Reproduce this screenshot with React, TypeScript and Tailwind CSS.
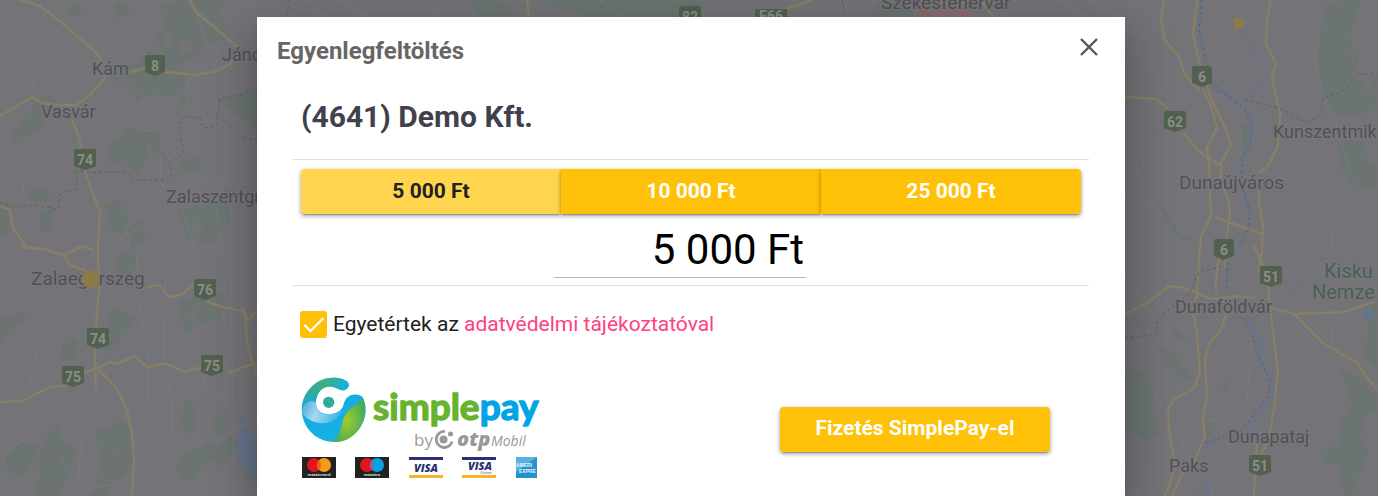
import { useState } from "react";

const amounts = ["5 000 Ft", "10 000 Ft", "25 000 Ft"];

const forests = [
  "M160 8l18-8h48l-8 12 12 22-10 8-14 0-8 14-20 10-14-14-8-14 10-14z",
  "M150 50l14 4 22 18-2 14-12 10-20-2-14 8-12-16-24-12 8-10 26 2z",
  "M66 10l14-6 2 10-12 4zM114 6l14-4 2 12-14 4zM22 120l10-10 2-8 14-6 6 10-10 12-4 14-14 4-12 14-2-14zM36 98l12-4 8 6-8 8-10-2z",
  "M112 140l8 2 6-16 18 8 4 24-12 16-12-14-14 4-2-12zM142 134l22-4-2 12 8 20-12-6zM176 162l20-6 8 10-8 6-16 2z",
  "M218 100l20-6 22-8v46l-22-16-20-14zM190 90l-4 20-10 6 2-18zM26 200l6-14 6 6 8-6 4 14-10 2zM178 212l20-10 22-2 4-14 12 8-8 14 4 14-14 10-6 12-24-4-6-16z",
  "M0 202l10 2 2 24-12 10zM40 214l14-6-4 24-10-2zM104 204l14-4 10 14-4 22-12-6zM128 228l14-8 4 20-14 12z",
  "M114 260l12-10 10 8-2 14-14 6zM178 302l18-6 16-8 14 10-6 22-22 4-12 12-4-18zM106 314l10-6 20 10-10 14-20 24-4-8 8-16zM62 342l12-8 4 12-4 14-12-2zM0 320l24-10 2 12-16 8-10 12z",
  "M96 432l22-10 18 4-6 20 4 20-16 14-14 16h-12l8-28zM6 456l16-14 16 2-2 14-18 20-12-10zM46 438l12-12 6 16 12 8-8 26-12 20H34l10-24-8-8zM184 398l10 6 2 22-10 16-4-18zM212 418l16-4-2 18-12 2zM176 466l10-14 14-4 12-10 8 10 10-12 8 6-10 22-22-4-10 20-14 0z",
  "M220 444l20-4 4 10-16 6zM236 454l22-2v24l-12 8zM40 474l8 4-4 16-10 0z",
  "M1324 6l22-6h18l-12 24-2 16 10 20-8 10 2 12 24-8v34l-20 8-26 0-8-22-6-36z",
  "M1340 140l22 2 6 20 10 6v18l-18 4-14-12-8-16z",
  "M1242 122l8 6-2 16-6 6zM1158 206l8 4 12 22 14 6-8 4-12-12zM1204 74l14 14 10 8-12-4-12-14zM1130 138l8 20 8 16-6-2zM1152 120l6 14-6-4z",
  "M1366 304h12v64l-14-12 4-22zM1340 370l12 2 26 26v14l-14 4-4 20 8 14-6 20-8 12 6 14h-14l-8-18 4-14-18-2-4-12 18-4 4-26 10-16z",
  "M1125 366l20 8 10 16-4 20 8 24-12 6-22-10zM1158 344l16 8 12 20 8 6-10 4-18-20zM1130 314l14 8 2 8-8-2zM1170 324l14 10 4 8-12-4zM1222 384l8-6-6 14zM1204 418l12 6-4 10-10 6zM1266 430l22 8 16-6 2 14-16-2-22 4z",
  "M470 0l28 0 20 16h-40zM540 0h170l-20 17H590l-24-6zM880 0h40l-10 17h-40z",
];

const urban = [
  "M178 42l12-4 2 12-10 6zM206 52l8 4-4 8-8-2zM166 30l8 8-6 10-6-6zM66 214l10 6-4 10-8-4zM194 222l8 0-2 12-10-2z",
  "M190 308l8 2-2 8-6 0zM114 446l8 4-4 8-6-4zM58 454l8 4-6 8zM1348 50l10 4-6 10zM1362 82l10-4 0 14-8-2z",
];

const fineRoads = [
  "M0 42l30 25 5 30M114 0l-22 50 10 20 24 10 14 12 8 22 14 22 6 22 24 20 28 10 32-4",
  "M34 96l40-18 30-26 28-18M90 113l30 4 16 12 14 2 20-8 16-16 4-32 20-4",
  "M186 0l8 8 8 20 12 44M162 122l-2 60 20 22 16 46M0 128l20 28 4 38",
  "M166 206l-16 18-30 14-16 12M216 206l6 44M230 200l4 290M166 246l-2 116 8 40 2 88",
  "M0 350l30-10 8-6 20 2 24-30 2-40M94 250l0 180-12 6-4 54M0 452l22-10 32-34",
  "M136 246l2 54 8 40 4 90M174 440l44 2 20-14 20-8M64 334l16 4M26 400l12-50 20-14M80 496l20-10 32-4",
  "M200 360l6 30 24 12M50 34l-10-34M0 60l28-20 28-10 40-12M210 180l44-14",
  "M1130 36l24-32M1138 42l20-24M1125 60l26 12 32-10 30-14M1192 42l30 0 10-10 36-22",
  "M1294 0l20 50 4 32 16 32 6 26M1340 140l10 30 18 30 10 4M1360 0l8 26 10 10",
  "M1125 192l20 14 24-6 18-8 20-4M1200 90l-20 10-30-8",
  "M1272 172l46 26 40 30 20 12M1260 6l34 0M1240 10l30-10M1210 70l14-24 10-16",
  "M1242 310l10 30-2 20-3 42-24 16-20 4M1125 366l24 20 32 50 10 34",
  "M1290 380l16-12 24-14 4-32 12-12M1335 210l-4 40-50 8-22 6M1256 430l24 20 8 14 24 10",
  "M1214 420l16 28-14 20-6 28M1125 470l38 0 26-16M1125 276l30 40M1160 316l40-16",
  "M310 0l12 17M340 0l30 17M430 0l6 17M600 0l20 17M1060 0l24 17M1090 0l28 17",
];

const mainRoads = [
  "M20 0l18 5 22 16 18 16 18 15 7 10M130 72l16-4 20 4 28 3 20-3 16-8 10-10M190 0l6 12 24 20 16 14",
  "M0 116l32-19 10 6 16 2 18 0 14-10 16-18M72 120l8 20 2 22 8 24 10 26-2 36 0 20 3 10-3 20-2 30-1 30 1 30",
  "M0 206l10 4 3 18 14 20 22 2 14 6 18-10 12 4M98 369l14 14 6 8 8 16 6 26 2 26-2 40",
  "M22 247l22 2 12 4 10 2 14-8M65 256l5 9 16 6M147 287l12-2 10 12 12-2 10-8 6-4M208 302l18 6 18 3 4 10 8-9M244 310l4 38 8 26",
  "M0 402l22-1 18-9 10-5 16-1M84 373l10-4M98 368l12-6 7 2 17-8 14 11 14-3 8 1 14 7 26-7M228 370l2 3 16-7 14-3",
  "M1164 0l-3 18 4 22 14 18 6 16 14 16M1197 0l-4 34 6 28 12 36 14 30 6 16-8 16-6 6",
  "M1203 88l8 18 6 22-10 20 2 18 2 50-10 20-2 24-2 34-4 16 4 24 3 38-6 16-20 12-6 8 1 22 6 36-6 20-4 10",
  "M1125 97l32 2 10 9M1184 134l14 16 10 8 14 8-2 14 8 18 2 14-4 30-1 24",
  "M1271 0l-4 20-1 24 10 20-4 14 8 36-2 32-10 20-8 6M1259 190l0 14 4 20-1 28-4 20",
  "M1220 250l-4 30 0 10M1254 246l8 16 6 20 2 24 4 34 4 30-4 40-6 30-8 18M1257 440l-1 26-2 30",
  "M1125 314l24-12 20-16 16 2 24 10 16 2M1217 299l20-3 18 2M1272 308l22 6 50-2 30-10M1294 314l30 30 32 18 14 20 8 8",
  "M1227 312l-6 18-12 14-4 16 2 36-4 24 2 16-10 24-12 12M1182 474l-10 22M1217 218l34 12 12 4M527 0l2 17M782 10l20-6 8-4M980 0l14 17",
];

const shields: [number, number, string][] = [
  [155, 65, "8"], [85, 159, "74"], [205, 289, "76"], [98, 338, "74"], [73, 376, "75"], [212, 365, "75"],
  [1202, 76, "6"], [1175, 121, "62"], [1224, 249, "6"], [1271, 276, "51"], [1260, 465, "51"], [690, 16, "82"],
];

const places: [number, number, string, number][] = [
  [92, 75, "Kám", 18], [41, 118, "Vasvár", 18], [222, 61, "Jáno", 18], [166, 203, "Zalaszentgr", 18],
  [31, 285, "Zalaegerszeg", 19], [881, 9, "Székesfehérvár", 19], [1179, 189, "Dunaújváros", 19],
  [1273, 138, "Kunszentmik", 18], [1175, 313, "Dunaföldvár", 18], [1228, 443, "Dunapataj", 18], [1169, 472, "Paks", 18],
];

function MapBackdrop() {
  return (
    <svg className="absolute inset-0 h-full w-full" viewBox="0 0 1378 496" preserveAspectRatio="xMidYMin slice" aria-hidden="true">
      <rect width="1378" height="496" fill="#747378" />
      <g fill="#6b7471">{forests.map((d) => <path key={d} d={d} />)}</g>
      <g fill="#747378">{urban.map((d) => <path key={d} d={d} />)}</g>
      <g fill="#65748a">
        <path d="M236 454l6-42 4 16 12 14v40l-8-10zM141 348l7 8-2 6zM142 363l4 10-2 4zM1155 61l8 1-1 5zM1173 56l5 7-6 1zM1207 284l9 3-2 4zM1363 312l6-4 6 4-2 6-8 2zM1038 180l4 2zM37 183l3-3 3 3z" />
        <path d="M1196 489l5 3-4 4z" />
      </g>
      <g fill="none" stroke="#68748a" strokeWidth="3" strokeLinejoin="round">
        <path d="M1202 0l-3 30 6 30 7 24 32 24 8 16-2 20-8 14 0 26 8 30-2 16-8 16-8 8M1227 262l0 30M1246 316l14 24 0 20 13 22-2 16-26 32M1227 440l-20 2-12 22 10 16 3 16" />
        <path strokeWidth="2" d="M1242 0l0 30 9 16 4 14 8 6M1268 74l-8 12-14 8-1 10 10 14M1260 124l12 6M1288 291l12-5 6-6" />
      </g>
      <g fill="none" stroke="#7a797d" strokeWidth="1">{fineRoads.map((d) => <path key={d} d={d} />)}</g>
      <g fill="none" strokeLinejoin="round" strokeLinecap="round">
        <g stroke="#7c7669" strokeWidth="4">{mainRoads.map((d) => <path key={d} d={d} />)}</g>
        <g stroke="#857f6f" strokeWidth="2">{mainRoads.map((d) => <path key={d} d={d} />)}</g>
      </g>
      <g fill="none" stroke="#5f5f64" strokeWidth="1" strokeDasharray="3 3">
        <path d="M0 203l14 4 20-2 24 4 2-16 16-3 1-19 20 2 28-2 9 9 30 0 8-4-2-12 14-12-6-26 8-10 14 2 4 10 12-2 4-28 22-3 18-8M216 114l28 24 14 2" />
        <path d="M1202 0l-3 30 6 30 7 24 32 24 8 16-2 20-8 14 0 26 8 30-2 16-8 16M1245 100l34 8 28 15 14-9 2-16 18-5 18-19 19-1M1125 338l32-4 0-14 32-26 10-22 24-6M1228 262l-2 30M1244 318l10 22 4 16 12 24-2 16-26 34-40 14" />
        <path d="M290 0l-4 17M842 0l4 17" />
      </g>
      <g>
        <path d="M908 0h17l7 17h-10c-5-7-7-13-14-17z" fill="#8d6867" />
        <path d="M933 17c5-14 35-14 42 0z" fill="#886c70" />
        <path d="M940 0h27l-6 6-20-1z" fill="#8b7e55" />
      </g>
      {places.map(([x, y, name, size]) => (
        <text key={name} x={x} y={y} fontSize={size} fill="#505055" stroke="#79787d" strokeWidth="2" paintOrder="stroke">{name}</text>
      ))}
      <g fontSize="20" fill="#486052" stroke="#79787d" strokeWidth="2" paintOrder="stroke">
        <text x="1324" y="278">Kisku</text>
        <text x="1312" y="299">Nemze</text>
      </g>
      {shields.map(([x, y, label]) => {
        const half = label.length === 1 ? 10 : 11;
        return (
          <g key={`${x}-${y}`}>
            <path d={`M${x - half} ${y - 8}q0-2 2-2h${half * 2 - 4}q2 0 2 2v15l-${half} 4l-${half}-4z`} fill="#52614e" />
            <text x={x} y={y + 6} textAnchor="middle" fontSize="14" fontWeight="700" fill="#8b8c8a">{label}</text>
          </g>
        );
      })}
      <path d="M755 9h32v18h-32z" fill="#52614e" />
      <text x="771" y="21" textAnchor="middle" fontSize="14" fontWeight="700" fill="#8b8c8a">E66</text>
      <circle cx="91" cy="279" r="9" fill="#8c7a48" />
      <path d="M1233 20q4-4 7-1q5-1 5 4l-4 6-6 0z" fill="#8c7a48" />
    </svg>
  );
}

function PaymentLogo() {
  return (
    <svg className="h-[106px] w-[240px] shrink-0" viewBox="300 376 240 106" role="img" aria-label="SimplePay by OTP Mobil">
      <defs>
        <linearGradient id="body" x1="0" y1="0" x2=".7" y2="1">
          <stop offset="0" stopColor="#3cae86" />
          <stop offset=".3" stopColor="#1ba9dc" />
          <stop offset=".8" stopColor="#14b0e6" />
          <stop offset="1" stopColor="#3cb09a" />
        </linearGradient>
        <radialGradient id="leaf" cx=".42" cy=".5" r=".6">
          <stop offset="0" stopColor="#a2cb2e" />
          <stop offset="1" stopColor="#43ad55" />
        </radialGradient>
        <linearGradient id="shine" x1="0" y1=".3" x2="1" y2=".6">
          <stop offset="0" stopColor="#4fb3d8" />
          <stop offset=".4" stopColor="#a9d8f0" />
          <stop offset="1" stopColor="#2fb3e6" />
        </linearGradient>
        <linearGradient id="rim" x1="0" y1="0" x2="1" y2="0">
          <stop offset="0" stopColor="#27a9b4" />
          <stop offset=".5" stopColor="#3db07c" />
          <stop offset="1" stopColor="#0fb0ea" />
        </linearGradient>
      </defs>
      <g transform="translate(298 374) scale(.3333)">
        <path d="M138 17C112 7 78 10 54 27C22 50 8 84 12 118C18 168 60 204 107 204C160 204 203 160 203 108C203 92 200 79 193 68C180 59 158 59 146 72C136 84 138 94 132 103C122 118 95 126 75 118C55 111 50 90 57 68C63 48 80 36 100 38C118 40 128 53 142 47C157 40 156 23 138 17Z" fill="url(#body)" />
        <path d="M138 17C112 7 78 10 54 27C28 46 14 72 12 100C24 76 44 66 57 68C63 48 80 36 100 38C118 40 128 53 142 47C157 40 156 23 138 17Z" fill="url(#rim)" />
        <path d="M12 112C18 82 40 74 54 86C53 104 62 120 88 122C108 122 124 114 132 103C130 130 102 150 72 148C40 146 16 130 12 112Z" fill="url(#shine)" />
        <path d="M196 74C207 110 200 150 168 182C150 198 130 204 107 204C124 190 128 165 135 138C144 106 170 96 196 74Z" fill="url(#leaf)" />
        <circle cx="92" cy="85" r="17" fill="#30ad9a" />
      </g>
      <g fontFamily="Lato, sans-serif" fontSize="37" fontWeight="700" strokeWidth="1.4" strokeLinejoin="round">
        <text x="373" y="420" fill="#65b32e" stroke="#65b32e">simple<tspan fill="#00a5e3" stroke="#00a5e3">pay</tspan></text>
      </g>
      <text x="414" y="446" fontSize="17" fontFamily="Open Sans, sans-serif" fill="#9b9b9b">by</text>
      <path d="M445 431.500a8 8 0 1 0 7 10" fill="none" stroke="#999" strokeWidth="2.8" />
      <circle cx="443.500" cy="439.500" r="4" fill="#999" />
      <circle cx="450.500" cy="434" r="2.5" fill="#999" />
      <text x="457" y="446" fontSize="20" fontFamily="Open Sans, sans-serif" fontWeight="800" fontStyle="italic" fill="#999">otp</text>
      <text x="491" y="446" fontSize="14" fontFamily="Open Sans, sans-serif" fontStyle="italic" fill="#999">Mobil</text>
      <g>
        <path d="M302 457h34v21h-34zM355 457h34v21h-34z" fill="#222" />
        <circle cx="314" cy="465" r="7" fill="#e3151c" />
        <circle cx="324" cy="465" r="7" fill="#f59b14" />
        <path d="M319 460q4 5 0 10q-4-5 0-10z" fill="#f15c1b" />
        <circle cx="367" cy="465" r="7" fill="#e3151c" />
        <circle cx="377" cy="465" r="7" fill="#08a2e2" />
        <path d="M372 460q4 5 0 10q-4-5 0-10z" fill="#7a6cab" />
        <g fontFamily="Open Sans, sans-serif" fontSize="4" fontWeight="700" fill="#ddd" textAnchor="middle">
          <text x="319" y="476">mastercard</text>
          <text x="372" y="476">maestro</text>
        </g>
      </g>
      <g fontFamily="Open Sans, sans-serif" fontWeight="800" fontStyle="italic" fill="#2c3072" textAnchor="middle">
        <path d="M409 457h34v3h-34zM462 457h34v3h-34z" />
        <path d="M409 475h34v3h-34zM462 475h34v3h-34z" fill="#f7b326" />
        <text x="426" y="472" fontSize="11">VISA</text>
        <text x="480" y="470" fontSize="11">VISA</text>
        <text x="486" y="474" fontSize="3" fontWeight="400">Electron</text>
      </g>
      <path d="M516 457h21v21h-21z" fill="#2591cf" />
      <path d="M516 457h21l-21 15z" fill="#57b2df" />
      <g fontFamily="Liberation Sans, sans-serif" fontSize="5" fontWeight="700" fill="#e5f5fc">
        <text x="516" y="467">AMERI</text>
        <text x="519" y="473">EXPRE</text>
      </g>
    </svg>
  );
}

export default function App() {
  const [amount, setAmount] = useState(amounts[0]);
  const [open, setOpen] = useState(true);
  const [agreed, setAgreed] = useState(true);

  return (
    <main className="relative flex min-h-screen flex-col overflow-hidden bg-[#747378] pt-[17px] pl-1 font-['Roboto',sans-serif]">
      <MapBackdrop />
      {open && (
        <section role="dialog" aria-modal="true" aria-labelledby="dialog-title" className="relative mx-auto w-full max-w-[868px] flex-1 bg-white shadow-[0_11px_15px_-7px_rgba(0,0,0,0.2),0_24px_38px_3px_rgba(0,0,0,0.14),0_9px_46px_8px_rgba(0,0,0,0.12)]">
          <header className="flex items-start justify-between pt-4 pr-5 pl-5">
            <h1 id="dialog-title" className="text-2xl leading-9 font-bold text-[#666]">Egyenlegfeltöltés</h1>
            <button type="button" aria-label="Bezárás" onClick={() => setOpen(false)} className="flex h-7 w-8 items-center justify-center text-[#55555a]">
              <svg className="h-[18px] w-[18px]" viewBox="0 0 18 18" fill="none" stroke="currentColor" strokeWidth="2.4" aria-hidden="true">
                <path d="M1 1l16 16M17 1L1 17" />
              </svg>
            </button>
          </header>

          <div className="px-9 pt-[30px]">
            <h2 className="px-2 text-3xl font-bold text-[#41414e]">(4641) Demo Kft.</h2>

            <div className="mt-6 border-y border-[#e0e0e0] px-2 pt-[9px] pb-[7px]">
              <div role="group" aria-label="Összeg" className="flex">
                {amounts.map((value) => (
                  <button
                    key={value}
                    type="button"
                    aria-pressed={amount === value}
                    onClick={() => setAmount(value)}
                    className={`h-[45px] flex-1 text-[21px] font-bold shadow-[0_3px_1px_-2px_rgba(0,0,0,0.2),0_2px_4px_0_rgba(0,0,0,0.3),0_1px_5px_0_rgba(0,0,0,0.12)] first:rounded-l last:rounded-r ${amount === value ? "bg-[#ffd54f] text-[#212121]" : "bg-[#ffc107] text-white"}`}
                  >
                    {value}
                  </button>
                ))}
              </div>
              <div className="flex justify-center pt-2 pr-[22px]">
                <input
                  type="text"
                  aria-label="Feltöltendő összeg"
                  value={amount}
                  onChange={(event) => setAmount(event.target.value)}
                  className="h-14 w-[252px] border-b border-[#b8b8b8] bg-transparent pr-[2px] text-right text-[42px] text-black outline-none"
                />
              </div>
            </div>

            <div className="mt-[22px] flex items-center gap-[6px] px-[7px] text-[21px] leading-8 text-[#212121]">
              <span className="relative flex h-[27px] w-[27px] shrink-0">
                <input
                  id="privacy"
                  type="checkbox"
                  checked={agreed}
                  onChange={(event) => setAgreed(event.target.checked)}
                  className="peer h-full w-full appearance-none rounded-[3px] border-2 border-[#757575] checked:border-[#ffc107] checked:bg-[#ffc107]"
                />
                <svg className="pointer-events-none absolute inset-0 hidden h-full w-full peer-checked:block" viewBox="0 0 27 27" fill="none" stroke="white" strokeWidth="2.4" aria-hidden="true">
                  <path d="M4.5 14l6 6L23.500 7" />
                </svg>
              </span>
              <label htmlFor="privacy">
                Egyetértek az <a href="#adatvedelem" className="text-[#ff4081]">adatvédelmi tájékoztatóval</a>
              </label>
            </div>

            <div className="mt-9 flex items-center justify-between pr-[39px] pl-[7px]">
              <PaymentLogo />
              <button type="button" className="h-[45px] w-[270px] rounded bg-[#ffc107] text-[21px] font-bold text-white shadow-[0_3px_1px_-2px_rgba(0,0,0,0.2),0_2px_4px_0_rgba(0,0,0,0.3),0_1px_5px_0_rgba(0,0,0,0.12)]">
                Fizetés SimplePay-el
              </button>
            </div>
          </div>
        </section>
      )}
    </main>
  );
}
